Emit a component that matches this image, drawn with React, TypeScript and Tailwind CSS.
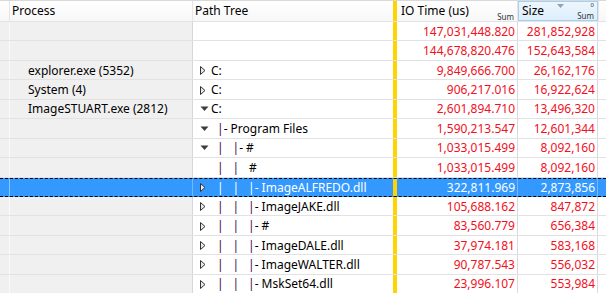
import type { ReactNode } from 'react';

type Row = {
  proc?: string;
  exp?: 'open' | 'closed';
  pipes?: number;
  branch?: boolean;
  name?: string;
  io: string;
  size: string;
  sel?: boolean;
};

const ROWS: Row[] = [
  { io: '147,031,448.820', size: '281,852,928' },
  { io: '144,678,820.476', size: '152,643,584' },
  { proc: 'explorer.exe (5352)', exp: 'closed', name: 'C:', io: '9,849,666.700', size: '26,162,176' },
  { proc: 'System (4)', exp: 'closed', name: 'C:', io: '906,217.016', size: '16,922,624' },
  { proc: 'ImageSTUART.exe (2812)', exp: 'open', name: 'C:', io: '2,601,894.710', size: '13,496,320' },
  { exp: 'open', pipes: 0, branch: true, name: 'Program Files', io: '1,590,213.547', size: '12,601,344' },
  { exp: 'open', pipes: 1, branch: true, name: '#', io: '1,033,015.499', size: '8,092,160' },
  { pipes: 2, name: '#', io: '1,033,015.499', size: '8,092,160' },
  { exp: 'closed', pipes: 2, branch: true, name: 'ImageALFREDO.dll', io: '322,811.969', size: '2,873,856', sel: true },
  { exp: 'closed', pipes: 2, branch: true, name: 'ImageJAKE.dll', io: '105,688.162', size: '847,872' },
  { exp: 'closed', pipes: 2, branch: true, name: '#', io: '83,560.779', size: '656,384' },
  { exp: 'closed', pipes: 2, branch: true, name: 'ImageDALE.dll', io: '37,974.181', size: '583,168' },
  { exp: 'closed', pipes: 2, branch: true, name: 'ImageWALTER.dll', io: '90,787.543', size: '556,032' },
  { exp: 'closed', pipes: 2, branch: true, name: 'MskSet64.dll', io: '23,996.107', size: '553,984' },
];

const COLS = 'grid grid-cols-[10px_183px_200px_4px_121px_80px_1fr]';
const PIPE = 'text-[#4a0844]';

function Expander({ kind }: { kind?: 'open' | 'closed' }) {
  if (!kind) return <span className="w-[14px] shrink-0" />;
  return (
    <span className="flex w-[14px] shrink-0 items-center justify-start pl-[4px]">
      {kind === 'open' ? (
        <svg width="9" height="6" viewBox="0 0 9 6">
          <path d="M0.5 0.5 L8.5 0.5 L4.5 5 Z" fill="#3c3c3c" />
        </svg>
      ) : (
        <svg width="6" height="9" viewBox="0 0 6 9">
          <path d="M0.5 0.5 L5 4.5 L0.5 8.5 Z" fill="#e8e8e8" stroke="#333" strokeWidth="1" />
        </svg>
      )}
    </span>
  );
}

function Pipe({ sel }: { sel?: boolean }) {
  return <span className={`inline-block w-[15.5px] shrink-0 ${sel ? 'text-white' : PIPE}`}>|</span>;
}

function TreeCell({ row }: { row: Row }) {
  const pipes: ReactNode[] = [];
  for (let i = 0; i < (row.pipes ?? 0); i++) pipes.push(<Pipe key={i} sel={row.sel} />);
  const nested = row.pipes !== undefined;
  return (
    <div className="flex items-center pl-[3px]">
      <Expander kind={row.exp} />
      {nested ? (
        <span className="ml-[7px] flex items-center whitespace-pre">
          {pipes}
          {row.branch ? (
            <>
              <span className={row.sel ? 'text-white' : PIPE}>|</span>
              <span>- {row.name}</span>
            </>
          ) : (
            <span className="pl-[1px]">{row.name}</span>
          )}
        </span>
      ) : (
        row.name && <span className="ml-[1px]">{row.name}</span>
      )}
    </div>
  );
}

function BodyRow({ row }: { row: Row }) {
  const sel = row.sel;
  const line = sel ? 'border-[#79b8f7]' : 'border-[#dadada]';
  return (
    <div
      className={`${COLS} h-[19.45px] pt-[1px] text-[12px] leading-none ${
        sel
          ? 'border-y border-dashed border-black bg-[#3399ff] text-white'
          : 'border-b border-[#e2e2e2] text-black'
      }`}
    >
      <div className={`-mt-[1px] border-r ${sel ? 'border-[#8cc4fa]' : 'border-[#fafafa] bg-[#f0f0f0]'}`} />
      <div className={`-mt-[1px] flex items-center border-r pl-[18px] pt-[1px] ${sel ? 'border-[#79b8f7]' : 'border-[#d6d6d6] bg-[#f0f0f0]'}`}>
        {row.proc}
      </div>
      <TreeCell row={row} />
      <div className="-mt-[1px] bg-[#ffd400]" />
      <div className={`-mt-[1px] flex items-center justify-end border-r pr-[2px] pt-[1px] ${line} ${sel ? '' : 'text-[#f2101c]'}`}>
        {row.io}
      </div>
      <div className={`-mt-[1px] flex items-center justify-end border-r pr-[2px] pt-[1px] ${line} ${sel ? '' : 'text-[#f2101c]'}`}>
        {row.size}
      </div>
      <div />
    </div>
  );
}

export default function App() {
  return (
    <div
      className="h-[293px] w-[606px] overflow-hidden bg-white"
      style={{ fontFamily: '"Noto Sans", "Open Sans", sans-serif' }}
    >
      <div className={`${COLS} h-[22px] border-t border-b border-t-[#d9d9d9] border-b-[#e3e3e3] bg-gradient-to-b from-white to-[#f7f7f7] text-[12px] text-black`}>
        <div className="border-r border-[#e5e5e5]" />
        <div className="flex items-center border-r border-[#e5e5e5] pl-[2px]">Process</div>
        <div className="flex items-center pl-[2px]">Path Tree</div>
        <div className="bg-[#ffd400]" />
        <div className="relative flex items-center border-r border-[#e5e5e5] pl-[4px]">
          IO Time (us)
          <span className="absolute bottom-0 right-[3px] text-[8px] leading-none text-[#333]">Sum</span>
        </div>
        <div className="relative flex items-center border border-[#a6d0f2] bg-gradient-to-b from-[#eef6fd] to-[#dceefc] pl-[3px]">
          Size
          <svg className="absolute left-[38px] top-[2px]" width="7" height="4" viewBox="0 0 7 4">
            <path d="M0 0 L7 0 L3.5 4 Z" fill="#8aa4c2" />
          </svg>
          <span className="absolute right-[3px] top-0 text-[6px] leading-none text-[#333]">0</span>
          <span className="absolute bottom-0 right-[3px] text-[8px] leading-none text-[#333]">Sum</span>
        </div>
        <div className="border-l border-[#e5e5e5]" />
      </div>
      {ROWS.map((r, i) => (
        <BodyRow key={i} row={r} />
      ))}
    </div>
  );
}
